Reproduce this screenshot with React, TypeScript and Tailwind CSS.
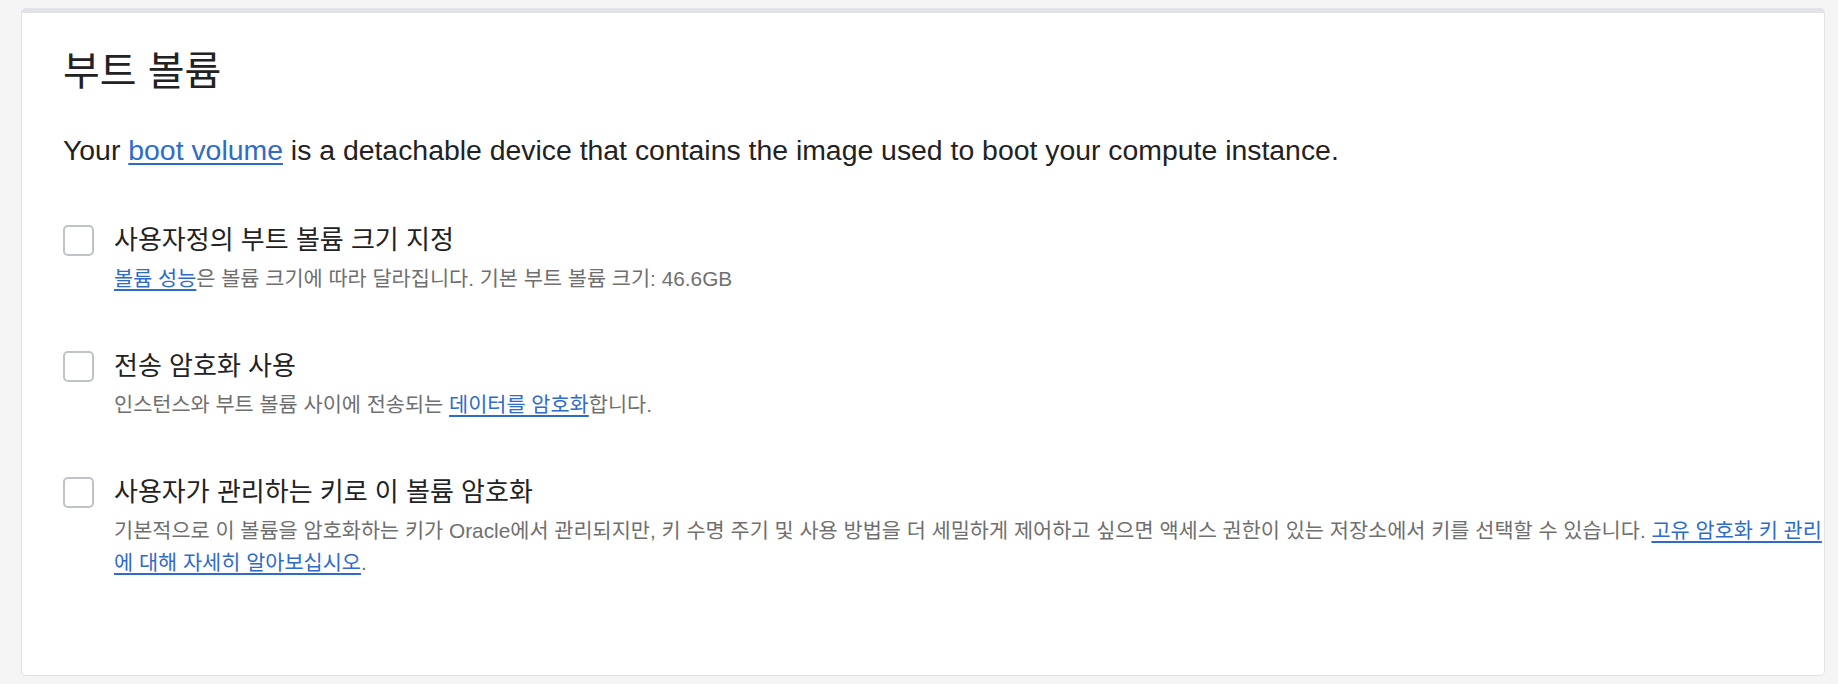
const FONT = "font-['Liberation_Sans','Noto_Sans_CJK_KR',sans-serif]";

function Link({ children }: { children: React.ReactNode }) {
  return <a className="text-[#2f6bc9] underline underline-offset-[3px] decoration-[1.5px]">{children}</a>;
}

function Option({ label, children }: { label: string; children: React.ReactNode }) {
  return (
    <div className="flex items-start gap-[20px]">
      <span className="mt-[1px] h-[31px] w-[31px] shrink-0 rounded-[5px] border-2 border-[#bfc2c7] bg-white" />
      <div className="min-w-0 flex-1">
        <div className="text-[26px] leading-[32px] text-[#222]">{label}</div>
        <div className="mt-[7px] text-[20.8px] leading-[32px] text-[#6f6f6f]">{children}</div>
      </div>
    </div>
  );
}

export default function App() {
  return (
    <div className={`${FONT} min-h-[684px] bg-[#f5f5f5] pl-[21px] pr-[13px] pt-[8px] pb-[8px]`}>
      <section className="h-[668px] rounded-[5px] border border-t-[5px] border-[#e2e3e6] bg-white pl-[41px] pt-[34px]">
        <h1 className="text-[40px] leading-[48px] text-[#222]">부트 볼륨</h1>
        <p className="mt-[36px] text-[28.4px] leading-[38px] text-[#222]">
          Your <Link>boot volume</Link> is a detachable device that contains the image used to boot your compute instance.
        </p>
        <div className="mt-[55px] flex flex-col gap-[55px]">
          <Option label="사용자정의 부트 볼륨 크기 지정">
            <Link>볼륨 성능</Link>은 볼륨 크기에 따라 달라집니다. 기본 부트 볼륨 크기: 46.6GB
          </Option>
          <Option label="전송 암호화 사용">
            인스턴스와 부트 볼륨 사이에 전송되는 <Link>데이터를 암호화</Link>합니다.
          </Option>
          <Option label="사용자가 관리하는 키로 이 볼륨 암호화">
            기본적으로 이 볼륨을 암호화하는 키가 Oracle에서 관리되지만, 키 수명 주기 및 사용 방법을 더 세밀하게 제어하고 싶으면 액세스 권한이 있는 저장소에서 키를 선택할 수 있습니다. <Link>고유 암호화 키 관리에 대해 자세히 알아보십시오</Link>.
          </Option>
        </div>
      </section>
    </div>
  );
}
